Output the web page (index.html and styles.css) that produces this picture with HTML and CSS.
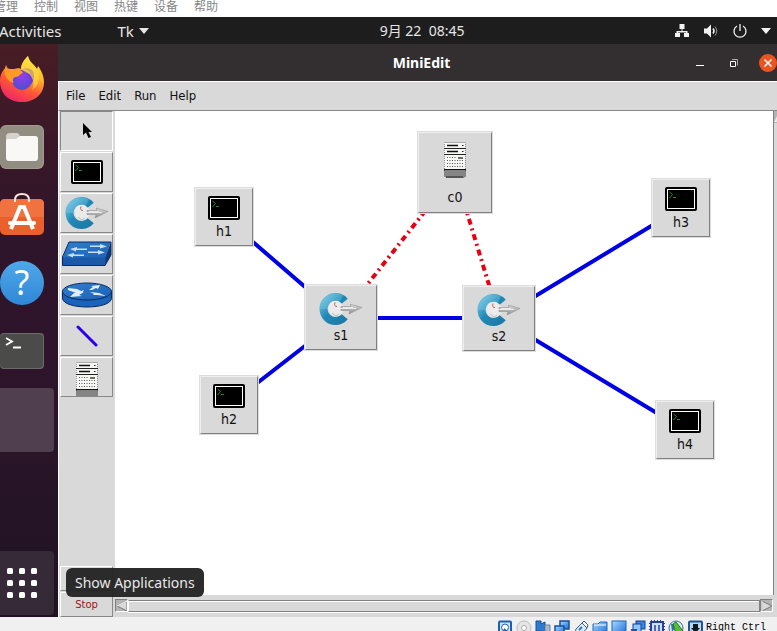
FILE: index.html
```html
<!DOCTYPE html>
<html lang="zh">
<head>
<meta charset="utf-8">
<title>MiniEdit</title>
<link rel="stylesheet" href="styles.css">
</head>
<body>
<svg class="defs" aria-hidden="true">
  <defs>
    <linearGradient id="ring" x1="0" y1="0" x2="1" y2="1">
      <stop offset="0" stop-color="#6cc0df"/><stop offset=".45" stop-color="#2189b6"/><stop offset="1" stop-color="#1c7aa6"/>
    </linearGradient>
    <linearGradient id="blade" x1="0" y1="0" x2="0" y2="1">
      <stop offset="0" stop-color="#dedede"/><stop offset="1" stop-color="#8c8c8c"/>
    </linearGradient>
    <linearGradient id="fox" x1=".8" y1="0" x2=".3" y2="1">
      <stop offset="0" stop-color="#fff04a"/><stop offset=".35" stop-color="#ffb62c"/><stop offset=".65" stop-color="#ff5a36"/><stop offset="1" stop-color="#f02368"/>
    </linearGradient>
    <radialGradient id="globe" cx=".5" cy=".3" r=".7">
      <stop offset="0" stop-color="#9a3bea"/><stop offset="1" stop-color="#4a4fd0"/>
    </radialGradient>
    <linearGradient id="glass" x1="0" y1="0" x2="1" y2="1">
      <stop offset="0" stop-color="#a8dcff"/><stop offset="1" stop-color="#1467d8"/>
    </linearGradient>
    <linearGradient id="device" x1="0" y1="0" x2="1" y2="1">
      <stop offset="0" stop-color="#2f7fd0"/><stop offset="1" stop-color="#1c60b4"/>
    </linearGradient>
  </defs>
  <symbol id="host" viewBox="0 0 32 24">
    <rect width="32" height="24" rx="2"/>
    <rect x="2.500" y="2.500" width="27" height="19" fill="none" stroke="#fff"/>
    <path d="M4.500 5l3 2.500-3 3.500M8 10.500h3" fill="none" stroke="#2c9a2c" stroke-width=".9"/>
  </symbol>
  <symbol id="key" viewBox="0 0 48 36">
    <path d="M27.700 10.300A12 12 0 1 0 27.700 25.700" fill="none" stroke="url(#ring)" stroke-width="8"/>
    <path d="M3 18A15.500 15.500 0 0 1 26 4.500l-3.500 6.500A8 8 0 0 0 10.500 18z" fill="#8dd3ea" opacity=".3"/>
    <path d="M13 12c5-4 11-2 13 3h7l-1-3 13 5-13 6.500V20h-6c-1 4-5 6-9 5-5-1-7-8-4-13z" fill="#ebebeb"/>
    <path d="M24 15.500h10l-1-2.500 12 3.500L32 23l1-3.500h-9z" fill="url(#blade)" stroke="#8c8c8c" stroke-width=".6"/>
    <path d="M20 17.500h19M26 16.500h10" stroke="#f5f5f5" stroke-width=".8"/>
    <path d="M18 11.500c-1 3 0 4 2 4" fill="none" stroke="#b5604e"/>
    <path d="M15 22l4 3 3-2" fill="none" stroke="#bcbcbc"/>
  </symbol>
  <symbol id="server" viewBox="0 0 22 36">
    <path d="M0 0h21v36H0z" fill="#f6f6f4"/>
    <path d="M.500 0v36M21.500 0v36" stroke="#8a8a8a" stroke-dasharray="1 1"/>
    <path d="M0 .500h22" stroke="#aaa"/>
    <path d="M3 3.500h11M3 9.500h11" stroke="#111" stroke-width="1.500"/>
    <path d="M18 3.500h1.500M18 9.500h1.500M0 6.500h22M0 12.500h22" stroke="#222"/>
    <path d="M3 15.500h9M3 18.500h16M3 21.500h16M3 24.500h16" stroke="#555" stroke-dasharray="1 1.500"/>
    <path d="M14 15h5v2h-5z" fill="#6b7058"/>
    <path d="M0 27h22v1.500H0z" fill="#111"/>
    <path d="M0 29h22v5l-2 2H2l-2-2z" fill="#858585"/>
    <path d="M2 35h17" stroke="#555" stroke-width="2"/>
  </symbol>
</svg>

<nav class="vm-menu" aria-label="VM">
  <a href="#">管理</a><a href="#">控制</a><a href="#">视图</a><a href="#">热键</a><a href="#">设备</a><a href="#">帮助</a>
</nav>

<header class="topbar">
  <div class="topbar-left">
    <button class="plain">Activities</button>
    <button class="plain app-menu">Tk <svg width="10" height="6" viewBox="0 0 10 6"><path d="M0 0h10L5 6z" fill="currentColor"/></svg></button>
  </div>
  <time class="clock">9月 22&nbsp; 08:45</time>
  <div class="tray">
    <svg width="16" height="16" viewBox="0 0 16 16" fill="currentColor"><path d="M5.500 1h5v5h-2v2h5v2H15v4h-5v-4h2V9.500H4V10h2v4H1v-4h1.500V8h5V6h-2z"/></svg>
    <svg width="16" height="16" viewBox="0 0 16 16"><path d="M1 5.500h3L8 1.500v13l-4-4H1z" fill="currentColor"/><path d="M10 5.500q2 2.500 0 5" fill="none" stroke="currentColor" stroke-width="1.500"/><path d="M12 3.500q3.500 4.500 0 9" fill="none" stroke="#999"/></svg>
    <svg width="16" height="16" viewBox="0 0 16 16" fill="none" stroke="currentColor" stroke-width="1.300"><path d="M5 3a6 6 0 1 0 6 0M8 1v7"/></svg>
    <svg width="10" height="6" viewBox="0 0 10 6"><path d="M0 0h10L5 6z" fill="currentColor"/></svg>
  </div>
</header>

<div class="desktop">
  <aside class="dock">
    <button class="dock-item" aria-label="Firefox">
      <svg width="44" height="46" viewBox="0 0 44 46">
        <path d="M6 9l3 6 5-2c3-1 6-1 7 0 0-5 3-9 7-13 1 6 6 8 9 13l1-3c3 4 6 10 6 16 0 12-9 20-22 20S0 38 0 25c0-6 2-9 5-13z" fill="url(#fox)"/>
        <circle cx="22" cy="24" r="10" fill="url(#globe)"/>
        <path d="M5 12c3 1 9 1 13 1 3 1 4 2 5 4-4 1-3 4-8 4-2 1-3 3-1 6-5-1-8-5-9-9z" fill="#ff9a25"/>
        <path d="M20 14c4-2 8 0 10 3l-3 1c4 3 5 7 3 11 4-3 5-9 3-14-3-3-8-4-13-1z" fill="#7435df"/>
        <path d="M28 0c1 6 6 8 9 13 4 8 2 17-5 21 3-7 1-12-3-16-3-2-6-3-8-5 0-5 3-9 7-13z" fill="#ffdf3e" opacity=".65"/>
      </svg>
    </button>
    <button class="dock-item" aria-label="Files">
      <svg width="44" height="44" viewBox="0 0 44 44"><rect width="44" height="44" rx="6" fill="#a09c8c"/><rect y="1" width="43" height="42" rx="6" fill="#918d80"/><path d="M6 12q0-4 4-4h7q2 0 3 3h14q4 0 4 4v5H6z" fill="#d6d1ca"/><path d="M6 16q0-2 3-2h7l4-3h15q3 0 3 3v19q0 3-3 3H9q-3 0-3-3z" fill="#faf8f7"/></svg>
    </button>
    <button class="dock-item" aria-label="Ubuntu Software">
      <svg width="44" height="44" viewBox="0 0 44 44"><rect y="6" width="44" height="36" rx="5" fill="#e9602c"/><path d="M0 24h44V11q0-5-5-5H5q-5 0-5 5z" fill="#f07240"/><path d="M15 9V7q0-6 7-6t7 6v2" fill="none" stroke="#f7e8df" stroke-width="2"/><path d="M11 36l9-22h4l9 22" fill="none" stroke="#fff" stroke-width="4"/><path d="M10 30h24" stroke="#fff" stroke-width="4" stroke-linecap="round"/></svg>
    </button>
    <button class="dock-item" aria-label="Help"><span class="help">?</span></button>
    <button class="dock-item" aria-label="Terminal">
      <svg width="44" height="36" viewBox="0 0 44 36"><rect width="44" height="36" rx="4" fill="#6a6a68"/><rect y="1" width="43" height="34" rx="4" fill="#4b4b49"/><path d="M6 5l6 3.500L6 12M13 14.500h8" fill="none" stroke="#fff" stroke-width="1.800"/></svg>
    </button>
    <button class="dock-tile" aria-label="MiniEdit"></button>
    <div class="apps">
      <button class="dock-tile apps-button" aria-labelledby="apps-tip">
        <svg width="32" height="32" viewBox="0 0 32 32" fill="#fff"><g id="dots"><rect x="1" y="1" width="6" height="6" rx="1.500"/><rect x="13" y="1" width="6" height="6" rx="1.500"/><rect x="25" y="1" width="6" height="6" rx="1.500"/></g><use href="#dots" y="12"/><use href="#dots" y="24"/></svg>
      </button>
      <div class="tooltip" id="apps-tip" role="tooltip">Show Applications</div>
    </div>
  </aside>

  <main class="window">
    <div class="titlebar">
      <h1 class="title">MiniEdit</h1>
      <div class="window-buttons">
        <button class="win" aria-label="Minimize"><svg width="18" height="18"><path d="M5 11.500h8" stroke="#fff"/></svg></button>
        <button class="win" aria-label="Restore"><svg width="18" height="18" fill="none" stroke="#fff"><path d="M5.500 7.500h5v5h-5z"/><path d="M7 5.500h5.500v6" stroke="#aaa"/></svg></button>
        <button class="win close" aria-label="Close"><svg width="18" height="18"><path d="M5.500 5.500l7 7M12.500 5.500l-7 7" stroke="#fff" stroke-width="1.500"/></svg></button>
      </div>
    </div>
    <nav class="menubar">
      <button>File</button><button>Edit</button><button>Run</button><button>Help</button>
    </nav>
    <div class="workspace">
      <div class="toolbar">
        <button class="tool selected" aria-label="Select"><svg width="12" height="16" viewBox="0 0 12 16"><path d="M2 0v12l3-2.500L7.500 15l2.500-1-2.500-5H11z"/></svg></button>
        <button class="tool" aria-label="Host"><svg width="32" height="24"><use href="#host"/></svg></button>
        <button class="tool" aria-label="Switch"><svg width="48" height="36"><use href="#key"/></svg></button>
        <button class="tool" aria-label="Legacy switch">
          <svg width="50" height="26" viewBox="0 0 50 26"><path d="M49 1v13l-6 10.500V16z" fill="#0d3a78"/><path d="M.500 16h43v8.500H.500z" fill="#1a58a8"/><path d="M7 1h42l-6 15.500H.500z" fill="url(#device)"/><path d="M7 1h42v13l-6 10.500H.500V16z" fill="none" stroke="#0a2c5c"/><path d="M28 4.500h10V3l7 2.500-7 2V6H28zM26 10.500h10V9l7 2.500-7 2V12H26zM25 9H14v1.500L8 8l7-2v1.500h10zM22 15H11v1.500L5 14l7-2v1.500h10z" fill="#c9def0"/></svg>
        </button>
        <button class="tool" aria-label="Legacy router">
          <svg width="50" height="26" viewBox="0 0 50 26"><path d="M.500 9v7c0 12 49 12 49 0V9z" fill="#1a62ba" stroke="#0a2c5c"/><ellipse cx="25" cy="9.500" rx="24.500" ry="8.500" fill="url(#device)" stroke="#0a2c5c"/><path d="M6 6l9 1 4 2 3-1-2 3-8 1 2-1-8-3zM27 8l4-3-2-1 9-1-2 4-2-1-4 2zM22 10l-5 3 3 1-12 1 4-4 2 1 5-3zM28 10l9 1 7 3-9-1-4 0 1-1z" fill="#e2eef7"/></svg>
        </button>
        <button class="tool" aria-label="Link"><svg width="22" height="22"><path d="M2 2l18 18" stroke="#2a00ef" stroke-width="3" stroke-linecap="round"/></svg></button>
        <button class="tool tool-server" aria-label="Controller"><svg width="22" height="36"><use href="#server"/></svg></button>
        <div class="run-buttons">
          <button class="run" aria-label="Run"></button>
          <button class="run">Stop</button>
        </div>
      </div>
      <div class="canvas-area">
        <div class="canvas">
          <svg class="links" width="658" height="484" fill="none" stroke-width="4">
            <g stroke="#0000e6">
              <path d="M109 106L226 207M114 294L226 207M226 207H384M384 207L566 97M384 207L570 319"/>
            </g>
            <g stroke="#e60012" stroke-dasharray="6 4 2 4">
              <path d="M340 62L226 207M340 62L384 207"/>
            </g>
          </svg>
          <button class="node h1"><svg width="32" height="24"><use href="#host"/></svg>h1</button>
          <button class="node h2"><svg width="32" height="24"><use href="#host"/></svg>h2</button>
          <button class="node h3"><svg width="32" height="24"><use href="#host"/></svg>h3</button>
          <button class="node h4"><svg width="32" height="24"><use href="#host"/></svg>h4</button>
          <button class="node switch s1"><svg width="48" height="36"><use href="#key"/></svg>s1</button>
          <button class="node switch s2"><svg width="48" height="36"><use href="#key"/></svg>s2</button>
          <button class="node controller c0"><svg width="22" height="36"><use href="#server"/></svg>c0</button>
        </div>
        <div class="vscroll"><svg width="4" height="12"><path d="M0 0h4v12H0z" fill="#b3b3b3"/><path d="M0 11L4 3v8z" fill="#e8e8e8"/></svg></div>
        <div class="hscroll">
          <button class="arrow" aria-label="Scroll left"><svg width="12" height="12"><path d="M11 1v10L1 6z" fill="#d9d9d9" stroke="#777"/><path d="M11 1L1 6" stroke="#fff"/></svg></button>
          <div class="thumb"></div>
          <button class="arrow" aria-label="Scroll right"><svg width="12" height="12"><path d="M1 1v10l10-5z" fill="#d9d9d9" stroke="#777"/><path d="M1 11V1" stroke="#fff"/></svg></button>
        </div>
      </div>
    </div>
  </main>
</div>

<footer class="status">
  <svg width="16" height="16"><rect x="2" y="1.500" width="12" height="14" rx="1" fill="#cfe6ff" stroke="#1c5fb4" stroke-width="2"/><circle cx="8" cy="7.500" r="3.500" fill="#fff" stroke="#1c5fb4"/><path d="M7 9l4 4" stroke="#1c5fb4" stroke-width="2"/></svg>
  <svg width="16" height="16"><circle cx="8" cy="8" r="7" fill="#e6e6e6" stroke="#bbb"/><circle cx="8" cy="8" r="2.500" fill="#fff" stroke="#aaa"/></svg>
  <svg width="16" height="16"><path d="M1 1h5v3l4-2v12l-4-3H1z" fill="#2e7cd0" stroke="#174e9b"/><path d="M10 5h5v8h-5z" fill="#a9b9cb" stroke="#6d8298"/></svg>
  <svg width="16" height="16"><rect x="6" y="1" width="9" height="8" fill="url(#glass)" stroke="#174e9b" stroke-width="1.500"/><rect x="1" y="6" width="9" height="8" fill="url(#glass)" stroke="#174e9b" stroke-width="1.500"/></svg>
  <svg width="16" height="16"><path d="M3 9l6-6 5 5-6 7-6-2z" fill="#dcebfb" stroke="#3b618c"/><path d="M9 3l2-2 4 4-1 3z" fill="#fff" stroke="#3b618c"/><path d="M6 10l3-3" stroke="#2879d0" stroke-width="2"/></svg>
  <svg width="16" height="16"><path d="M1 4h5l2-2h7v13H1z" fill="url(#glass)" stroke="#1b6cc4"/><path d="M2 5h12" stroke="#fff"/></svg>
  <svg width="16" height="16"><rect x="1" y="1" width="14" height="14" fill="url(#glass)" stroke="#1c64bc"/></svg>
  <svg width="16" height="16"><rect x="6" y="1" width="9" height="8" fill="#3f84dc" stroke="#173f98"/><rect x="3" y="4" width="8" height="8" fill="#8cc7ff" stroke="#173f98"/><path d="M1 9h6v6H1z" fill="#2652ac"/></svg>
  <svg width="16" height="16"><rect x="2" y="2" width="12" height="14" fill="#cce0ff" stroke="#263fa8" stroke-width="2"/><path d="M2 .500h12M.500 3v12M15.500 3v12" stroke="#263fa8" stroke-dasharray="1 2"/><path d="M6 5v6q2 2 4 0V5" fill="none" stroke="#263fa8" stroke-width="1.500"/></svg>
  <svg width="16" height="16"><circle cx="8" cy="8" r="7" fill="#d7ebff" stroke="#3d6c8e"/><path d="M3 4l7 0-6 8z" fill="#2c70c6"/><path d="M5 4l3-2 7 9-2 4-5-1z" fill="#59bd37" stroke="#287a1c"/></svg>
  <svg width="16" height="16"><rect x="2" y="1.500" width="13" height="14" rx="1" fill="#b9d7f1" stroke="#1f568f" stroke-width="2"/><path d="M6 4h5v4h2l-4.500 5L4 8h2z" fill="#101820"/></svg>
  <span>Right Ctrl</span>
</footer>
</body>
</html>
```
FILE: styles.css
```css
* { box-sizing: border-box; }
body {
  margin: 0;
  height: 100vh;
  display: flex;
  flex-direction: column;
  overflow: hidden;
  background: #f0f0f0;
  font-family: "Noto Sans", "Noto Sans CJK SC", sans-serif;
}
button { margin: 0; padding: 0; border: 0; background: none; color: inherit; font: inherit; }
svg { display: block; flex: none; }
.defs { position: absolute; width: 0; height: 0; }

.vm-menu {
  flex: 0 0 17px;
  display: flex;
  gap: 16px;
  margin-left: -6px;
  background: #fff;
  font: 12px/12px "Noto Sans CJK SC", sans-serif;
}
.vm-menu a { color: #858585; text-decoration: none; }

.topbar {
  flex: 0 0 27px;
  display: flex;
  align-items: center;
  background: #1d1d1d;
  color: #e6e6e6;
  font-size: 14px;
  line-height: 20px;
}
.topbar-left { flex: 0 0 49%; display: flex; gap: 56px; margin-left: -1px; font-size: 15px; }
.app-menu { display: flex; align-items: center; gap: 5px; }
.tray { display: flex; align-items: center; gap: 13px; margin-left: auto; padding-right: 6px; color: #f2f2f2; }

.desktop { flex: 1; display: flex; min-height: 0; }
.dock {
  flex: 0 0 58px;
  display: flex;
  flex-direction: column;
  padding: 1px 0 2px;
  background: linear-gradient(#481d24 0, #3c1828 15%, #2f152b 32%, #2d142a 65%, #241426 82%, #211223 100%);
}
.dock-item { flex: 0 0 68px; display: flex; align-items: center; }
.help {
  width: 44px;
  height: 44px;
  border-radius: 50%;
  background: linear-gradient(#50a7e8, #2f88d6);
  color: #fff;
  font: 34px/42px "Noto Sans", sans-serif;
  text-align: center;
}
.dock-tile { width: 54px; height: 64px; margin-top: 3px; border-radius: 0 4px 4px 0; background: #50404f; }
.apps { position: relative; margin-top: auto; }
.apps-button { display: flex; align-items: center; padding-left: 6px; margin: 0; background: #372a38; }
.tooltip {
  position: absolute;
  left: 66px;
  bottom: 18px;
  z-index: 2;
  padding: 4px 9px;
  border-radius: 6px;
  background: rgba(35, 35, 35, .96);
  color: #e8e8e8;
  font-size: 14px;
  line-height: 21px;
  white-space: nowrap;
}

.window { flex: 1; min-width: 0; display: flex; flex-direction: column; background: #d9d9d9; }
.titlebar {
  flex: 0 0 37px;
  display: grid;
  grid-template-columns: 1fr auto 1fr;
  align-items: center;
  padding-left: 8px;
  background: #332f31;
  color: #fff;
}
.title { grid-column: 2; margin: 0; font-size: 14px; line-height: 20px; }
.window-buttons { display: flex; justify-content: flex-end; gap: 16px; }
.win { width: 18px; height: 18px; border-radius: 50%; }
.close { background: #e9541f; }
.menubar {
  flex: 0 0 30px;
  display: flex;
  align-items: center;
  gap: 13px;
  padding: 0 0 2px 7px;
  border-top: 1px solid #fff;
  border-bottom: 1px solid #888;
  border-left: 1px solid #fff;
}
.menubar, .node { font-family: "DejaVu Sans Condensed", "DejaVu Sans", sans-serif; font-size: 14px; color: #111; }
.menubar { font-size: 13px; }
.workspace { flex: 1; display: flex; min-height: 0; }
.toolbar {
  flex: 0 0 57px;
  display: flex;
  flex-direction: column;
  gap: 1px;
  padding: 0 2px 0 1px;
  border-left: 1px solid #fff;
}
.tool {
  flex: 0 0 40px;
  display: flex;
  align-items: center;
  justify-content: center;
  border: 1px solid;
  border-color: #fff #888 #888 #fff;
  overflow: hidden;
}
.tool.selected { border-color: #888 #fff #fff #888; }
.tool-server { align-items: flex-start; padding-top: 4px; }
.run-buttons { margin-top: auto; display: flex; flex-direction: column; gap: 1px; }
.run {
  height: 25px;
  border: 1px solid;
  border-color: #fff #888 #888 #fff;
  font: 10px/22px "DejaVu Sans", sans-serif;
  color: #a01515;
}

.canvas-area { flex: 1; min-width: 0; display: grid; grid-template: minmax(0, 1fr) 22px / minmax(0, 1fr) 4px; }
.canvas { position: relative; overflow: hidden; background: #fff; }
.node {
  position: absolute;
  width: 58px;
  height: 58px;
  display: flex;
  flex-direction: column;
  align-items: center;
  justify-content: center;
  gap: 3px;
  border: 1px solid;
  border-color: #eee #808080 #808080 #eee;
  outline: 1px solid #ddd;
  background: #d9d9d9;
  line-height: 16px;
}
.switch { width: 72px; height: 65px; gap: 0; padding-bottom: 2px; }
.controller { width: 74px; height: 81px; gap: 11px; padding-top: 2px; }
.h1 { left: 80px; top: 77px; }
.h2 { left: 85px; top: 265px; }
.h3 { left: 537px; top: 68px; }
.h4 { left: 541px; top: 290px; }
.s1 { left: 190px; top: 174px; }
.s2 { left: 348px; top: 175px; }
.c0 { left: 303px; top: 21px; }
.vscroll { border-left: 1px solid #808080; background: #d9d9d9; }
.hscroll { display: flex; align-items: center; padding-bottom: 1px; background: #d9d9d9; }
.arrow { width: 13px; height: 13px; border: 1px solid; border-color: #808080 #fff #fff #808080; background: #b3b3b3; overflow: hidden; }
.thumb { flex: 1; height: 12px; border: 1px solid; border-color: #808080 #808080 #808080 #fff; box-shadow: inset 0 1px #fff, 0 1px #fff; }

.status {
  flex: 0 0 14px;
  display: flex;
  justify-content: flex-end;
  align-items: flex-start;
  gap: 3px;
  padding: 3px 11px 0 0;
  overflow: hidden;
  background: #f0f0f0;
  font: 10px/16px "Liberation Mono", monospace;
  color: #000;
}
```
